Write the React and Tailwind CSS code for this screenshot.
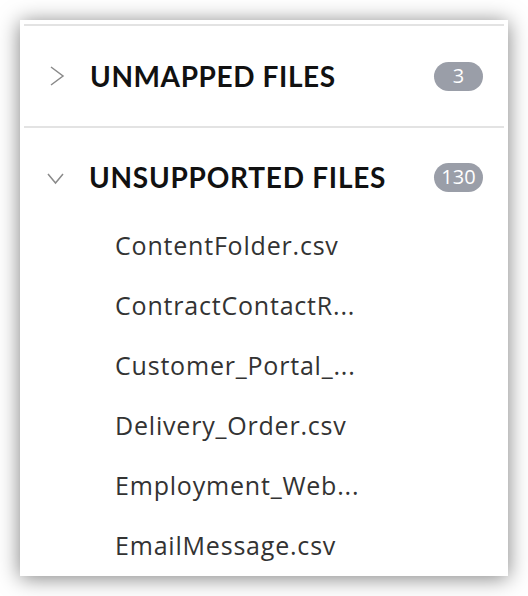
import React from "react";

const files = [
  "ContentFolder.csv",
  "ContractContactR...",
  "Customer_Portal_...",
  "Delivery_Order.csv",
  "Employment_Web...",
  "EmailMessage.csv",
];

function ChevronRight() {
  return (
    <svg width="20" height="20" viewBox="0 0 20 20" className="shrink-0">
      <polyline points="5,1 17,10 5,19" fill="none" stroke="#8a8a8a" strokeWidth="1.5" />
    </svg>
  );
}

function ChevronDown() {
  return (
    <svg width="20" height="20" viewBox="0 0 20 20" className="shrink-0">
      <polyline points="2,7 9.5,16 17,7" fill="none" stroke="#8a8a8a" strokeWidth="1.5" />
    </svg>
  );
}

function Badge({ children }) {
  return (
    <div className="ml-auto flex h-[29px] w-[49px] items-center justify-center rounded-full bg-[#9a9ea8] font-['Open_Sans',sans-serif] text-[20px] text-white">
      {children}
    </div>
  );
}

export default function App() {
  return (
    <div className="min-h-[596px] w-[528px] bg-white pl-[20px] pt-[20px] font-['Lato',sans-serif]">
      <div className="h-[556px] w-[488px] overflow-hidden bg-white pt-[4px] shadow-[0_2px_20px_rgba(0,0,0,0.5)]">
        <div className="mx-[4px] h-[2px] bg-[#e3e3e3]" />
        <div className="flex h-[100px] items-center pl-[26px] pr-[25px]">
          <ChevronRight />
          <div className="ml-[24px] text-[28px] font-bold tracking-[0.6px] text-[#111]">UNMAPPED FILES</div>
          <Badge>3</Badge>
        </div>
        <div className="mx-[4px] h-[2px] bg-[#e3e3e3]" />
        <div className="flex h-[88px] items-center pl-[26px] pr-[25px] pt-[10px]">
          <ChevronDown />
          <div className="ml-[23px] text-[28px] font-bold tracking-[0.75px] text-[#111]">UNSUPPORTED FILES</div>
          <Badge>130</Badge>
        </div>
        <div className="flex flex-col font-['Open_Sans',sans-serif]">
          {files.map((f) => (
            <div key={f} className="flex h-[60px] items-center pl-[95px] text-[25px] tracking-[0.8px] text-[#333]">
              {f}
            </div>
          ))}
        </div>
      </div>
    </div>
  );
}
